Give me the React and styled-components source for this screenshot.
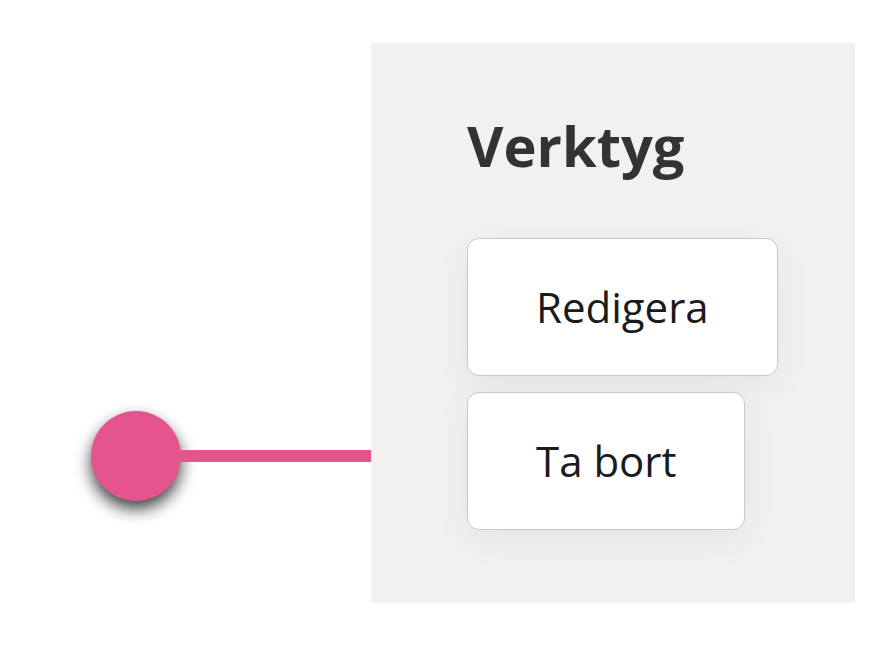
import React from "react";
import styled, { createGlobalStyle } from "styled-components";

const GlobalStyle = createGlobalStyle`
  html, body {
    margin: 0;
    padding: 0;
    background: #ffffff;
    font-family: "Open Sans", "Noto Sans", sans-serif;
  }
`;

const Page = styled.div`
  display: flex;
  align-items: flex-start;
  padding: 43px 0 0 91px;
`;

const Connector = styled.div`
  display: flex;
  align-items: center;
  width: 280px;
  margin-top: 368px;
`;

const Dot = styled.div`
  width: 90px;
  height: 90px;
  flex: none;
  border-radius: 50%;
  background: #e4558e;
  box-shadow: 0 8px 16px rgba(0, 0, 0, 0.75);
`;

const Line = styled.div`
  flex: 1;
  height: 12px;
  background: #e4558e;
`;

const Panel = styled.div`
  width: 484px;
  height: 560px;
  box-sizing: border-box;
  padding: 69px 0 0 96px;
  background: #f2f1ef;
`;

const Title = styled.h1`
  margin: 0 0 59px;
  font-size: 56px;
  line-height: 67px;
  font-weight: 700;
  color: #333333;
`;

const Tools = styled.div`
  display: flex;
  flex-direction: column;
  align-items: flex-start;
  gap: 16px;
`;

const ToolButton = styled.button`
  padding: 40px 68px;
  font-family: inherit;
  font-size: 42px;
  line-height: 56px;
  color: #1b1b1b;
  background: #ffffff;
  border: 1.5px solid #c9c9c9;
  border-radius: 12px;
  box-shadow: 0 10px 36px rgba(0, 0, 0, 0.06);
  cursor: pointer;
`;

export default function App() {
  return (
    <>
      <GlobalStyle />
      <Page>
        <Connector>
          <Dot />
          <Line />
        </Connector>
        <Panel>
          <Title>Verktyg</Title>
          <Tools>
            <ToolButton>Redigera</ToolButton>
            <ToolButton>Ta bort</ToolButton>
          </Tools>
        </Panel>
      </Page>
    </>
  );
}
